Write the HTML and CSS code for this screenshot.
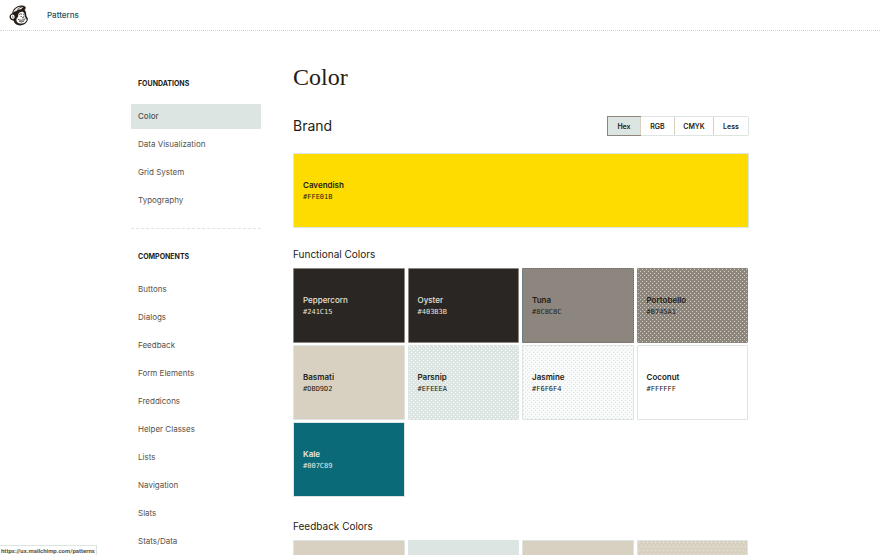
FILE: index.html
```html
<!DOCTYPE html>
<html lang="en">
<head>
<meta charset="utf-8">
<title>Color | Patterns</title>
<meta name="viewport" content="width=device-width, initial-scale=1">
<link rel="stylesheet" href="styles.css">
</head>
<body>
<header class="topbar">
  <a class="logo" href="#" aria-label="Home">
    <svg viewBox="0 0 20 21" width="20" height="21" aria-hidden="true">
      <path fill="#241c15" d="M3.2 8.2C3.6 4.400 7.500 .6 12 .5c2.200 0 4.400.5 4.700 1.900.2 1-.5 1.800-1.200 2.400 1.400 1.300 1.700 3.300 1.800 5.600l.9 2.200c.9.7.9 2.200.3 3.100-1.400 2.900-4.200 4.700-7.400 4.700-3.300 0-5.700-1.900-6.500-4.700C2.600 15.500.9 14.400.6 12.600.3 10.700 1.300 8.800 3.200 8.200z"/>
      <path fill="#dfe5e3" d="M4.200 7.600C5.100 4.300 8.600 1.600 12.400 1.500c-2 1-3.700 2.300-4.500 4.200C6.600 6 5.300 6.700 4.200 7.600z"/>
      <path fill="#fff" d="M8.700 4.900c1.100-1.500 3.300-2.900 5.900-3-1.100.6-2 1.500-2.500 2.300-1.200-.1-2.300.1-3.400.7zM3.600 9.500c1.200.1 1.800 1 2 2.100.2 1.200-.4 2.200-1.500 2.300-1.300 0-2.300-1-2.200-2.200 0-1.300.7-2.200 1.700-2.200z"/>
      <path fill="#fff" d="M9.200 9.600c.5-2 2.300-3.300 4.300-2.900 1.700.5 2.300 2.300 2.200 4.300.2.700 1 1.500 1.100 2.400.5.200.9.500.9 1-.2 2.200-2.600 4.200-5.700 4.200-3.300 0-5-2-4.500-4.600.3-1.300 1.500-1.800 1.700-2.500.1-.6-.1-1.200 0-1.900z"/>
      <path fill="none" stroke="#241c15" stroke-width=".8" stroke-linecap="round" d="M10.300 9.500c.8-.9 1.700-.9 2.400-.4M14.300 9.200l.7-.1M12 11.400h.5M14.600 11.300h.3M13.400 12.800h1.400M9.200 14.300c1.900 1.500 4.700 1.300 7-.4M10.200 16.300c1.600 1 3.500.7 4.800-.3"/>
      <path fill="none" stroke="#241c15" stroke-width=".6" d="M3 11.300c.8-.3 1.200.2 1.100.9l-.5.7"/>
    </svg>
  </a>
  <a class="brand-link" href="#">Patterns</a>
</header>

<div class="page">
  <nav class="sidebar" aria-label="Patterns">
    <section class="nav-group">
      <h2>Foundations</h2>
      <ul>
        <li><a class="current" href="#" aria-current="page">Color</a></li>
        <li><a href="#">Data Visualization</a></li>
        <li><a href="#">Grid System</a></li>
        <li><a href="#">Typography</a></li>
      </ul>
    </section>
    <section class="nav-group">
      <h2>Components</h2>
      <ul>
        <li><a href="#">Buttons</a></li>
        <li><a href="#">Dialogs</a></li>
        <li><a href="#">Feedback</a></li>
        <li><a href="#">Form Elements</a></li>
        <li><a href="#">Freddicons</a></li>
        <li><a href="#">Helper Classes</a></li>
        <li><a href="#">Lists</a></li>
        <li><a href="#">Navigation</a></li>
        <li><a href="#">Slats</a></li>
        <li><a href="#">Stats/Data</a></li>
      </ul>
    </section>
  </nav>

  <main>
    <h1>Color</h1>
    <div class="section-head">
      <h2>Brand</h2>
      <div class="formats" role="group" aria-label="Color format">
        <button class="active" type="button" aria-pressed="true">Hex</button>
        <button type="button">RGB</button>
        <button type="button">CMYK</button>
        <button type="button">Less</button>
      </div>
    </div>
    <div class="swatch cavendish"><strong>Cavendish</strong><code>#FFE01B</code></div>

    <h3>Functional Colors</h3>
    <div class="swatches">
      <div class="swatch peppercorn"><strong>Peppercorn</strong><code>#241C15</code></div>
      <div class="swatch oyster"><strong>Oyster</strong><code>#403B3B</code></div>
      <div class="swatch tuna"><strong>Tuna</strong><code>#8C8C8C</code></div>
      <div class="swatch portobello"><strong>Portobello</strong><code>#B745A1</code></div>
      <div class="swatch basmati"><strong>Basmati</strong><code>#DBD9D2</code></div>
      <div class="swatch parsnip"><strong>Parsnip</strong><code>#EFEEEA</code></div>
      <div class="swatch jasmine"><strong>Jasmine</strong><code>#F6F6F4</code></div>
      <div class="swatch coconut"><strong>Coconut</strong><code>#FFFFFF</code></div>
      <div class="swatch kale"><strong>Kale</strong><code>#007C89</code></div>
    </div>

    <h3>Feedback Colors</h3>
    <div class="swatches">
      <div class="swatch basmati"></div>
      <div class="swatch mist"></div>
      <div class="swatch basmati"></div>
      <div class="swatch basmati speckled"></div>
    </div>
  </main>
</div>

<div class="status">https://ux.mailchimp.com/patterns</div>
</body>
</html>
```

FILE: styles.css
```css
:root {
  --ink: #241c15;
  --text: #57524b;
  --mist: #dde5e3;
  --sand: #d8d1c1;
  --stone: #8c867f;
  --teal: #0b6a77;
}

* { box-sizing: border-box; }

body {
  margin: 0;
  height: 100vh;
  overflow: hidden;
  background: #fff;
  color: var(--ink);
  font-family: Inter, "Liberation Sans", sans-serif;
  font-size: 8px;
}

h1, h2, h3, ul { margin: 0; padding: 0; }
ul { list-style: none; }
a { color: inherit; text-decoration: none; }

.topbar {
  display: flex;
  align-items: center;
  gap: 18px;
  height: 31px;
  padding: 0 9px;
  border-bottom: 1px dotted #cfd5d3;
}

.logo svg { display: block; }

.brand-link {
  color: #24505a;
  font-weight: 500;
}

.page {
  display: grid;
  grid-template-columns: 130px 1fr;
  gap: 32px;
  max-width: 618px;
  margin: 0 auto;
}

.sidebar { padding-top: 47px; }

.nav-group h2 {
  padding: 0 7px;
  font-size: 7px;
  line-height: 12px;
  font-weight: 700;
  text-transform: uppercase;
}

.nav-group ul {
  display: grid;
  gap: 3px;
  margin-top: 14px;
}

.nav-group a {
  display: block;
  padding: 0 7px;
  line-height: 25px;
  color: var(--text);
}

.nav-group a.current {
  background-color: var(--mist);
  font-weight: 500;
  border-radius: 1px;
}

.nav-group + .nav-group {
  margin-top: 15px;
  padding-top: 22px;
  border-top: 1px dashed var(--mist);
}

main { padding-top: 30px; }

h1 {
  font-family: "Liberation Serif", serif;
  font-size: 24px;
  line-height: 32px;
  font-weight: 400;
}

.section-head {
  display: flex;
  justify-content: space-between;
  align-items: center;
  margin: 23px 0 17px;
}

.section-head h2 {
  font-size: 14px;
  line-height: 20px;
  font-weight: 400;
}

.formats {
  display: grid;
  grid-template-columns: 32px 34px 39px 35px;
  border: 1px solid var(--mist);
  border-radius: 2px;
}

.formats button {
  height: 18px;
  margin: 0;
  padding: 0;
  border: 0;
  border-left: 1px solid var(--sand);
  background: #fff;
  color: var(--ink);
  font: 600 7px Inter, "Liberation Sans", sans-serif;
}

.formats button.active {
  border: 0;
  outline: 1px solid var(--stone);
  background: var(--mist);
}

h3 {
  margin-bottom: 7px;
  font-size: 10px;
  line-height: 14px;
  font-weight: 400;
}

.swatches {
  display: grid;
  grid-template-columns: repeat(4, 1fr);
  gap: 2px 3px;
  margin: 0 1px 22px 0;
}

.swatch {
  display: flex;
  flex-direction: column;
  justify-content: center;
  height: 75px;
  padding: 0 9px;
  border: 1px solid var(--mist);
  border-radius: 1px;
}

.swatch strong {
  font-weight: 600;
  line-height: 12px;
}

.swatch code {
  font: 7px/12px "DejaVu Sans Mono", monospace;
}

.cavendish { margin-bottom: 19px; background: #ffdc00; }
.peppercorn, .oyster { background: #2a2623; border-color: var(--stone); color: #e6e2d8; }
.peppercorn strong, .oyster strong { font-weight: 500; }
.tuna { background: var(--stone); border: 1px dotted #4b7a80; }

/* Fine one-pixel grain over the flat color */
.portobello, .parsnip, .jasmine, .speckled {
  background-image:
    conic-gradient(from 0deg at 1px 1px, transparent 75%, var(--grain) 0),
    conic-gradient(from 0deg at 1px 1px, transparent 75%, var(--grain) 0);
  background-size: 4px 4px;
  background-position: 0 0, 2px 2px;
}

.portobello { --grain: #d8d1c1; background-color: var(--stone); border-color: var(--stone); }
.parsnip { --grain: #fff; background-color: var(--mist); }
.jasmine { --grain: #dde5e3; background-color: #f8faf9; }
.basmati { background-color: var(--sand); }
.coconut { background: #fff; }
.kale { background: var(--teal); color: #e9eae4; }
.mist { background: var(--mist); }

.speckled {
  --grain: #eeebe2;
  background-size: 4px 8px;
  background-position: 3px 5px, 1px 9px;
}

.status {
  position: fixed;
  left: 0;
  bottom: 0;
  padding: 0 1px;
  border: 1px solid var(--mist);
  border-left: 0;
  border-bottom: 0;
  background: #fff;
  color: #57524b;
  font: 700 6px/9px Roboto, "Liberation Sans", sans-serif;
}
```
